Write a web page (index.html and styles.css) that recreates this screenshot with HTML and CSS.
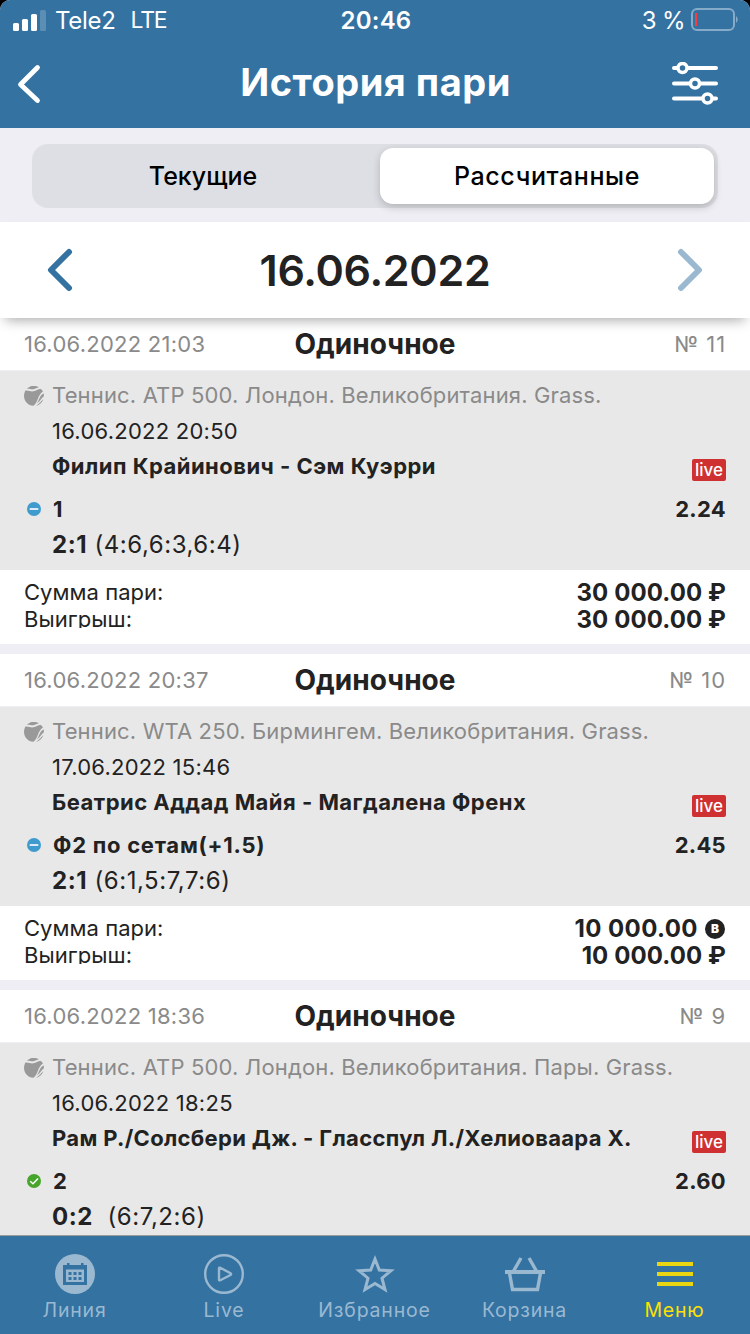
FILE: index.html
```html
<!DOCTYPE html>
<html lang="ru">
<head>
    <meta charset="UTF-8">
    <meta name="viewport" content="width=device-width, initial-scale=1.0">
    <title>История пари</title>
    <link rel="stylesheet" href="styles.css">
</head>
<body>
    <!-- Shared icons -->
    <svg class="sprite" width="0" height="0">
        <symbol id="tennis" viewBox="0 0 20 20">
            <path d="M3 2.800C6-.600 11-.900 15 1.200 12.500 1.500 11.500 2.800 9.500 3.300 7.500 3.600 5.500 2.700 3 2.800Z"/>
            <path d="M1.500 4.600C4 4 6.500 5.800 9.500 5.300 12.500 4.600 14 2.700 17 3L19 5.500C16 7.500 15 10 13.800 13 12.500 16 11.500 18.500 9.500 19.800 4 19.500 .200 15.500 0 10 0 8 .500 6.500 1.500 4.600Z"/>
            <path d="M19.700 7.500C20 8.500 20 9.500 19.800 10.500 17.500 11.500 16.500 15 13 17.500 15.500 13.500 15.500 9.500 19.700 7.500Z"/>
            <path d="M19.400 13C18.300 16.500 15.500 19.200 11.800 20 15.500 18 17 15 19.400 13Z"/>
        </symbol>
        <symbol id="minus" viewBox="0 0 14 14">
            <circle cx="7" cy="7" r="7" fill="#3f9bce"/>
            <rect x="2.700" y="6.100" width="8.600" height="1.800" fill="#e8f3fa"/>
        </symbol>
        <symbol id="check" viewBox="0 0 14 14">
            <circle cx="7" cy="7" r="7" fill="#47a52c"/>
            <path d="M3.200 7.200 6 9.800 11 4.600" fill="none" stroke="#fff" stroke-width="1.500"/>
        </symbol>
    </svg>

    <div class="app">
        <header class="top">
            <div class="status">
                <div class="status-left">
                    <svg width="33" height="21" viewBox="0 0 33 21" fill="#fff">
                        <rect x="0" y="13" width="6" height="8" rx="1.500"/>
                        <rect x="9" y="9" width="6" height="12" rx="1.500"/>
                        <rect x="18" y="4" width="6" height="17" rx="1.500"/>
                        <rect x="27" y="0" width="6" height="21" rx="1.500" opacity=".2"/>
                    </svg>
                    <span class="carrier">Tele2</span>
                    <span class="network">LTE</span>
                </div>
                <span class="clock">20:46</span>
                <div class="status-right">
                    <span>3 %</span>
                    <svg width="48" height="24" viewBox="0 0 48 24">
                        <rect x="1" y="1" width="42" height="21" rx="5" fill="none" stroke="#86abc9" stroke-width="2"/>
                        <rect x="4" y="5" width="2" height="13" fill="#fb3b3c"/>
                        <path d="M45 8Q48.500 11.500 45 15Z" fill="#86abc9"/>
                    </svg>
                </div>
            </div>
            <div class="navbar">
                <svg width="26" height="40" viewBox="0 0 26 40" fill="none" stroke="#fff" stroke-width="4.800" stroke-linecap="round" stroke-linejoin="round">
                    <path d="M21.500 3.500 4.500 20.500 21.500 36.500"/>
                </svg>
                <h1>История пари</h1>
                <svg class="settings" width="46" height="44" viewBox="0 0 46 44" fill="#3472a2" stroke="#fff" stroke-width="4" stroke-linecap="round">
                    <path d="M2 6H44M2 21.500H44M2 36.500H44"/>
                    <circle cx="10.500" cy="6" r="4.500" stroke-width="3.500"/>
                    <circle cx="23" cy="21.500" r="4.500" stroke-width="3.500"/>
                    <circle cx="35.500" cy="36.500" r="4.500" stroke-width="3.500"/>
                </svg>
            </div>
        </header>

        <div class="filter">
            <div class="segments">
                <button class="segment">Текущие</button>
                <button class="segment active">Рассчитанные</button>
            </div>
        </div>

        <div class="datebar">
            <svg width="26" height="44" viewBox="0 0 26 44" fill="none" stroke="#3472a2" stroke-width="6" stroke-linecap="round" stroke-linejoin="round">
                <path d="M22 4 4 22 22 40"/>
            </svg>
            <span class="date">16.06.2022</span>
            <svg width="26" height="44" viewBox="0 0 26 44" fill="none" stroke="#9ab9d1" stroke-width="6" stroke-linecap="round" stroke-linejoin="round">
                <path d="M4 4 22 22 4 40"/>
            </svg>
        </div>

        <main class="bets">
            <section class="bet">
                <div class="bet-head">
                    <span class="placed">16.06.2022 21:03</span>
                    <h2>Одиночное</h2>
                    <span class="number">№ 11</span>
                </div>
                <div class="event">
                    <div class="row league"><svg class="ball"><use href="#tennis"/></svg><span>Теннис. ATP 500. Лондон. Великобритания. Grass.</span></div>
                    <div class="row start">16.06.2022 20:50</div>
                    <div class="row players"><span>Филип Крайинович - Сэм Куэрри</span><span class="live">live</span></div>
                    <div class="row pick"><svg class="result"><use href="#minus"/></svg><span>1</span><span class="odds">2.24</span></div>
                    <div class="row score"><b>2:1</b> (4:6,6:3,6:4)</div>
                </div>
                <div class="totals">
                    <div class="total"><span>Сумма пари:</span><b>30 000.00 ₽</b></div>
                    <div class="total"><span>Выигрыш:</span><b>30 000.00 ₽</b></div>
                </div>
            </section>

            <section class="bet">
                <div class="bet-head">
                    <span class="placed">16.06.2022 20:37</span>
                    <h2>Одиночное</h2>
                    <span class="number">№ 10</span>
                </div>
                <div class="event">
                    <div class="row league"><svg class="ball"><use href="#tennis"/></svg><span>Теннис. WTA 250. Бирмингем. Великобритания. Grass.</span></div>
                    <div class="row start">17.06.2022 15:46</div>
                    <div class="row players"><span>Беатрис Аддад Майя - Магдалена Френх</span><span class="live">live</span></div>
                    <div class="row pick"><svg class="result"><use href="#minus"/></svg><span>Ф2 по сетам(+1.5)</span><span class="odds">2.45</span></div>
                    <div class="row score"><b>2:1</b> (6:1,5:7,7:6)</div>
                </div>
                <div class="totals">
                    <div class="total"><span>Сумма пари:</span><b>10 000.00 <i class="bonus">B</i></b></div>
                    <div class="total"><span>Выигрыш:</span><b>10 000.00 ₽</b></div>
                </div>
            </section>

            <section class="bet">
                <div class="bet-head">
                    <span class="placed">16.06.2022 18:36</span>
                    <h2>Одиночное</h2>
                    <span class="number">№ 9</span>
                </div>
                <div class="event">
                    <div class="row league"><svg class="ball"><use href="#tennis"/></svg><span>Теннис. ATP 500. Лондон. Великобритания. Пары. Grass.</span></div>
                    <div class="row start">16.06.2022 18:25</div>
                    <div class="row players doubles"><span>Рам Р./Солсбери Дж. - Гласспул Л./Хелиоваара Х.</span><span class="live">live</span></div>
                    <div class="row pick"><svg class="result"><use href="#check"/></svg><span>2</span><span class="odds">2.60</span></div>
                    <div class="row score"><b>0:2</b>&nbsp; (6:7,2:6)</div>
                </div>
            </section>
        </main>

        <nav class="tabbar">
            <a class="tab">
                <svg width="40" height="40" viewBox="0 0 40 40">
                    <circle cx="20" cy="20" r="20" fill="#9ab9d1"/>
                    <path d="M8 11H12V9H14.500V11H26V9H28.500V11H32V31H8Z" fill="#3472a2"/>
                    <rect x="11" y="15.500" width="18" height="12.500" fill="#9ab9d1"/>
                    <path d="M13.500 18h3v3h-3zM18.500 18h3v3h-3zM23.500 18h3v3h-3zM13.500 23h3v3h-3zM18.500 23h3v3h-3zM23.500 23h3v3h-3z" fill="#3472a2"/>
                </svg>
                <span>Линия</span>
            </a>
            <a class="tab">
                <svg width="40" height="40" viewBox="0 0 40 40" fill="none" stroke="#9ab9d1" stroke-width="2.400">
                    <circle cx="20" cy="20" r="18.800"/>
                    <path d="M15 14.500V25.500Q15 26.800 16.300 26.200L26.500 21Q27.800 20.100 26.500 19.200L16.300 13.800Q15 13.200 15 14.500Z"/>
                </svg>
                <span>Live</span>
            </a>
            <a class="tab">
                <svg width="40" height="40" viewBox="0 0 40 40" fill="none" stroke="#9ab9d1" stroke-width="3">
                    <path d="M20 5 24.300 16 36 16.700 27 24.200 30 35.500 20 29.500 10 35.500 13 24.200 4 16.700 15.700 16Z"/>
                </svg>
                <span>Избранное</span>
            </a>
            <a class="tab">
                <svg width="40" height="40" viewBox="0 0 40 40" fill="none" stroke="#9ab9d1">
                    <path d="M0 18H40" stroke-width="4"/>
                    <path d="M16 4 8 18M24 4 32 18M4.500 19 7.500 35.500H32.500L35.500 19" stroke-width="3.400"/>
                </svg>
                <span>Корзина</span>
            </a>
            <a class="tab current">
                <svg width="40" height="40" viewBox="0 0 40 40" fill="#ead512">
                    <path d="M2 8H38V12H2ZM2 18H38V22H2ZM2 28H38V32H2Z"/>
                </svg>
                <span>Меню</span>
            </a>
        </nav>
    </div>
</body>
</html>
```
FILE: styles.css
```css
* {
    box-sizing: border-box;
}

body {
    margin: 0;
    background: #000;
    color: #222;
    font-family: Inter, "Liberation Sans", sans-serif;
    font-size: 22px;
}

h1, h2 {
    margin: 0;
}

svg {
    display: block;
    flex: none;
}

.sprite {
    position: absolute;
}

.app {
    display: flex;
    flex-direction: column;
    width: 750px;
    height: 1334px;
    overflow: hidden;
    background: #efeef4;
    border-radius: 10px 10px 0 0;
}

/* Header */
.top {
    height: 128px;
    flex: none;
    background: #3472a2;
    color: #fff;
}

.status {
    display: grid;
    grid-template-columns: 1fr auto 1fr;
    align-items: center;
    height: 40px;
    padding: 0 11px 0 13px;
    font-size: 24px;
}

.status-left, .status-right {
    display: flex;
    align-items: center;
}

.carrier {
    margin-left: 9px;
    letter-spacing: -.3px;
}

.network {
    margin-left: 15px;
    font-size: 23px;
    letter-spacing: -1.2px;
}

.clock {
    font-weight: 600;
    letter-spacing: .2px;
}

.status-right {
    justify-content: flex-end;
    gap: 6px;
    letter-spacing: -.6px;
}

.navbar {
    display: grid;
    grid-template-columns: 1fr auto 1fr;
    align-items: center;
    height: 88px;
    padding: 0 32px 0 16px;
}

.navbar h1 {
    padding: 0 0 4px 17px;
    font-size: 38px;
    font-weight: 700;
    letter-spacing: .5px;
}

.settings {
    justify-self: end;
}

/* Current / settled switch */
.filter {
    flex: none;
    height: 94px;
    padding: 16px 32px 14px;
}

.segments {
    display: flex;
    height: 64px;
    padding: 4px;
    border-radius: 16px;
    background: #dedfe4;
}

.segment {
    flex: 1;
    padding: 0 10px 0 0;
    border: 0;
    border-radius: 13px;
    background: none;
    color: #000;
    font: 500 25px Inter, sans-serif;
}

.segment.active {
    flex: none;
    width: 334px;
    padding: 0;
    background: #fff;
    box-shadow: 0 3px 8px rgba(0, 0, 0, .2);
    letter-spacing: .6px;
}

.datebar {
    position: relative;
    display: flex;
    flex: none;
    align-items: center;
    justify-content: space-between;
    height: 96px;
    padding: 0 47px;
    background: #fff;
    box-shadow: 0 7px 12px -5px rgba(0, 0, 0, .35);
}

.date {
    font-size: 43px;
    font-weight: 600;
    letter-spacing: -.3px;
}

/* Bets */
.bets {
    flex: 1;
    min-height: 0;
    overflow: hidden;
}

.bet {
    margin-bottom: 10px;
    background: #fff;
}

.bet-head {
    display: grid;
    grid-template-columns: 1fr auto 1fr;
    align-items: center;
    height: 53px;
    padding: 0 24px;
    border-bottom: 1px solid #efeef4;
    color: #8a8a8a;
    letter-spacing: .25px;
}

.bet-head h2 {
    color: #222;
    font-size: 28px;
    letter-spacing: .05px;
}

.number {
    text-align: right;
    letter-spacing: .9px;
}

.event {
    height: 199px;
    padding: 6px 24px 0 52px;
    background: #e8e8e8;
}

.row {
    display: flex;
    align-items: center;
    height: 36px;
    white-space: pre;
}

.league {
    color: #8a8a8a;
    letter-spacing: .15px;
}

.ball {
    width: 20px;
    height: 20px;
    margin: 2px 8px 0 -28px;
    fill: #999;
}

.start {
    letter-spacing: .25px;
}

.players {
    justify-content: space-between;
    height: 34px;
    font-weight: 700;
    letter-spacing: .48px;
}

.doubles {
    letter-spacing: .33px;
}

.live {
    height: 22px;
    margin-top: 8px;
    padding: 0 3px;
    border-radius: 2px;
    background: #cf3132;
    color: #fff;
    font-size: 17px;
    font-weight: 500;
    line-height: 22px;
    letter-spacing: 0;
}

.pick {
    height: 52px;
    font-weight: 700;
    letter-spacing: .75px;
}

.result {
    width: 14px;
    height: 14px;
    margin: 0 12px 0 -25px;
}

.odds {
    margin-left: auto;
    padding-bottom: 1px;
    letter-spacing: .3px;
}

.score {
    height: 19px;
    font-size: 24px;
    letter-spacing: .55px;
}

.totals {
    height: 74px;
    padding: 9px 24px 0;
}

.total {
    display: flex;
    justify-content: space-between;
    height: 27px;
    line-height: 27px;
    letter-spacing: .05px;
}

.total:last-child {
    height: 22px;
    overflow: hidden;
}

.total b {
    font-size: 24px;
    letter-spacing: .1px;
}

.bonus {
    display: inline-block;
    width: 20px;
    height: 20px;
    margin: 0 1px;
    border-radius: 50%;
    background: #222;
    color: #fff;
    font-size: 12px;
    font-style: normal;
    font-weight: 900;
    line-height: 20px;
    letter-spacing: 0;
    text-align: center;
    vertical-align: 4px;
}

.total b:has(.bonus) {
    letter-spacing: .4px;
}

/* Bottom tabs */
.tabbar {
    display: grid;
    grid-template-columns: 149px 150px 151px 149px 151px;
    flex: none;
    height: 99px;
    padding-top: 18px;
    border-top: 1px solid #9c9d99;
    background: #3472a2;
    color: #9ab9d1;
    font-size: 19.500px;
}

.tab {
    display: flex;
    flex-direction: column;
    align-items: center;
    gap: 4px;
    letter-spacing: .8px;
}

.tab.current {
    color: #ffe000;
}
```
